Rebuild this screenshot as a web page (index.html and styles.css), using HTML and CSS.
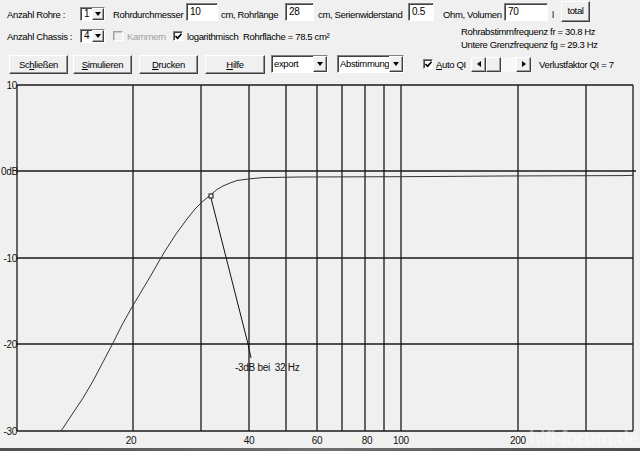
FILE: index.html
```html
<!DOCTYPE html>
<html lang="de">
<head>
    <meta charset="UTF-8">
    <title>Bassreflex Simulation</title>
    <link rel="stylesheet" href="styles.css">
</head>
<body>
    <div class="toolbar">
        <div class="row row-top">
            <span class="lbl lbl-rohre">Anzahl Rohre :</span>
            <span class="combo combo-num"><span class="combo-text">1</span><span class="drop"></span></span>
            <span class="lbl lbl-durch">Rohrdurchmesser</span>
            <span class="field f-durch">10</span>
            <span class="lbl lbl-laenge">cm, Rohrlänge</span>
            <span class="field f-laenge">28</span>
            <span class="lbl lbl-serie">cm, Serienwiderstand</span>
            <span class="field f-serie">0.5</span>
            <span class="lbl lbl-ohm">Ohm, Volumen</span>
            <span class="field f-vol">70</span>
            <span class="lbl lbl-l">l</span>
            <span class="btn btn-total">total</span>
        </div>

        <div class="row row-mid">
            <div class="mid-left">
                <span class="lbl lbl-rohre">Anzahl Chassis :</span>
                <span class="combo combo-num"><span class="combo-text">4</span><span class="drop"></span></span>
                <span class="check check-off disabled"></span>
                <span class="lbl lbl-kammern grayed">Kammern</span>
                <span class="check">
                    <svg width="7" height="7" viewBox="0 0 7 7"><polyline points="0.5,3 2.6,5.2 6.5,0.8" fill="none" stroke="#000" stroke-width="1.6"/></svg>
                </span>
                <span class="lbl lbl-log">logarithmisch</span>
                <span class="lbl">Rohrfläche = 78.5 cm²</span>
            </div>
            <div class="freq">
                <div>Rohrabstimmfrequenz fr = 30.8 Hz</div>
                <div>Untere Grenzfrequenz fg = 29.3 Hz</div>
            </div>
        </div>

        <div class="row row-bottom">
            <span class="btn btn-cmd first">Sc<u>h</u>ließen</span>
            <span class="btn btn-cmd gap5"><u>S</u>imulieren</span>
            <span class="btn btn-cmd gap7"><u>D</u>rucken</span>
            <span class="btn btn-cmd btn-wide gap7"><u>H</u>ilfe</span>
            <span class="combo combo-tall combo-export"><span class="combo-text">export</span><span class="drop"></span></span>
            <span class="combo combo-tall combo-abst"><span class="combo-text">Abstimmung</span><span class="drop"></span></span>
            <span class="check check-auto">
                <svg width="7" height="7" viewBox="0 0 7 7"><polyline points="0.5,3 2.6,5.2 6.5,0.8" fill="none" stroke="#000" stroke-width="1.6"/></svg>
            </span>
            <span class="lbl lbl-auto"><u>A</u>uto QI</span>
            <span class="scroll">
                <span class="sb-btn"><span class="arrow-left"></span></span>
                <span class="sb-btn"></span>
                <span class="sb-track"></span>
                <span class="sb-btn"><span class="arrow-right"></span></span>
            </span>
            <span class="lbl lbl-verlust">Verlustfaktor QI = 7</span>
        </div>
    </div>

    <svg class="chart" width="640" height="370" viewBox="0 78 640 370">
        <g class="grid" fill="none" stroke="#1a1a1a" stroke-width="1.3">
            <path d="M17 85H633 M17 171H636 M17 258H633 M17 344H633 M17 431H633"/>
            <path d="M17 85V431 M133 85V431 M201 85V431 M249 85V431 M286 85V431 M317 85V431 M342 85V431 M365 85V431 M384 85V431 M401 85V431 M518 85V431 M586 85V431 M633 85V431"/>
        </g>

        <g class="axis-y" text-anchor="end">
            <text x="17" y="88.5">10</text>
            <text x="18" y="174.5">0dB</text>
            <text x="17" y="261.5">-10</text>
            <text x="17" y="347.5">-20</text>
            <text x="17" y="434.5">-30</text>
        </g>
        <g class="axis-x" text-anchor="middle">
            <text x="131" y="444">20</text>
            <text x="249" y="444">40</text>
            <text x="317" y="444">60</text>
            <text x="367" y="444">80</text>
            <text x="401" y="444">100</text>
            <text x="518" y="444">200</text>
        </g>

        <polyline class="curve" fill="none" stroke="#333" stroke-width="1"
            points="61,431 67,422 73,413 83,398 93,381 103,362 113,343 122,325 132,307 141,292 150,277 158,263 165,251 176,234 187,219 195,209 202,202 211,194.5 217,189.5 223,186 230,183 237,180.5 250,178.8 263,177.6 300,177 400,176.7 433,176.5 500,176 624,175.6 633,175.3"/>

        <rect x="209" y="194" width="4" height="4" fill="#f0f0f0" stroke="#111" stroke-width="1"/>
        <polyline fill="none" stroke="#111" stroke-width="1" points="211,198 248,344 251,358"/>
        <text class="note" x="235" y="370.5">-3dB bei&#160; 32 Hz</text>

        <text class="watermark" x="638" y="445" text-anchor="end">hifi-forum.de</text>
    </svg>
    <div class="frame-bottom"></div>
</body>
</html>
```

FILE: styles.css
```css
html, body {
    margin: 0;
    padding: 0;
}
body {
    width: 640px;
    height: 451px;
    overflow: hidden;
    background-color: #f0f0f0;
    font-family: "Liberation Sans", Arial, sans-serif;
    font-size: 9.5px;
    letter-spacing: -0.35px;
    color: #000;
}
.toolbar {
    height: 78px;
}
.row {
    display: flex;
    white-space: nowrap;
}
.lbl {
    line-height: 13px;
    white-space: nowrap;
}

/* first row */
.row-top {
    height: 21px;
    align-items: flex-end;
    padding-left: 7px;
}
.lbl-rohre { width: 73px; }
.lbl-durch { width: 73px; margin-left: 8px; }
.lbl-laenge { width: 64px; margin-left: 3px; }
.lbl-serie { width: 90px; margin-left: 4px; }
.lbl-ohm { width: 61px; margin-left: 9px; }
.lbl-l { width: 9px; margin-left: 4px; }

.field {
    box-sizing: border-box;
    height: 18px;
    padding: 1px 3px;
    line-height: 14px;
    font-size: 10px;
    background-color: #fff;
    border: 1px solid;
    border-color: #808080 #fff #fff #808080;
    box-shadow: inset 1px 1px #404040;
}
.f-durch { width: 32px; }
.f-laenge { width: 29px; }
.f-serie { width: 26px; }
.f-vol { width: 44px; }

.combo {
    box-sizing: border-box;
    display: flex;
    height: 14px;
    background-color: #fff;
    border: 1px solid;
    border-color: #808080 #fff #fff #808080;
    box-shadow: inset 1px 1px #404040;
}
.combo-num { width: 25px; }
.combo-text {
    flex: 1;
    padding: 0 0 0 3px;
    line-height: 12px;
    font-size: 10px;
    overflow: hidden;
}
.drop {
    box-sizing: border-box;
    width: 12px;
    display: flex;
    align-items: center;
    justify-content: center;
    background-color: #f0f0f0;
    border: 1px solid;
    border-color: #fff #404040 #404040 #fff;
    box-shadow: inset -1px -1px #a0a0a0;
}
.drop::after {
    content: "";
    border-style: solid;
    border-width: 4px 3.5px 0 3.5px;
    border-color: #000 transparent transparent transparent;
}

.btn {
    box-sizing: border-box;
    display: flex;
    align-items: center;
    justify-content: center;
    background-color: #f0f0f0;
    border: 1px solid;
    border-color: #fff #404040 #404040 #fff;
    box-shadow: inset -1px -1px #909090;
}
.btn u {
    text-decoration-thickness: 1px;
    text-underline-offset: 1px;
}
.btn-total {
    width: 29px;
    height: 21px;
    margin-bottom: -1px;
    padding-bottom: 3px;
}

/* second row */
.row-mid {
    height: 31px;
    align-items: flex-start;
    padding-left: 7px;
}
.mid-left {
    display: flex;
    align-items: flex-end;
    height: 22px;
}
.check {
    box-sizing: border-box;
    width: 10px;
    height: 10px;
    display: flex;
    align-items: center;
    justify-content: center;
    background-color: #fff;
    border: 1px solid;
    border-color: #808080 #fff #fff #808080;
    box-shadow: inset 1px 1px #404040;
    margin-bottom: 2px;
}
.check svg {
    display: block;
}
.check-off {
    margin-left: 8px;
}
.disabled {
    background-color: #f0f0f0;
    border-color: #a0a0a0 #fff #fff #a0a0a0;
    box-shadow: inset 1px 1px #c8c8c8;
}
.grayed {
    color: #a0a0a0;
}
.lbl-kammern { width: 46px; margin-left: 4px; }
.lbl-log { width: 56px; margin-left: 4px; }
.freq {
    margin-left: auto;
    width: 179px;
    padding-top: 4px;
    line-height: 13px;
}

/* third row */
.row-bottom {
    height: 24px;
    align-items: center;
}
.btn-cmd {
    width: 59px;
    height: 19px;
}
.btn-wide { width: 60px; }
.first { margin-left: 9px; }
.gap5 { margin-left: 5px; }
.gap7 { margin-left: 7px; }
.combo-tall {
    height: 18px;
}
.combo-tall .combo-text {
    padding-left: 2px;
    line-height: 15px;
    font-size: 9.5px;
}
.combo-tall .drop {
    width: 14px;
}
.combo-export { width: 57px; margin-left: 6px; }
.combo-abst { width: 67px; margin-left: 9px; }
.check-auto {
    margin: 0 0 0 19px;
}
.lbl-auto { width: 35px; margin-left: 3px; }
.lbl-verlust { margin-left: 8px; }

.scroll {
    display: flex;
    width: 60px;
    height: 15px;
    background-color: #f8f8f8;
}
.sb-btn {
    box-sizing: border-box;
    width: 15px;
    height: 15px;
    display: flex;
    align-items: center;
    justify-content: center;
    background-color: #f0f0f0;
    border: 1px solid;
    border-color: #fff #404040 #404040 #fff;
    box-shadow: inset -1px -1px #a0a0a0;
}
.sb-track {
    flex: 1;
}
.arrow-left {
    border-style: solid;
    border-width: 3.5px 4px 3.5px 0;
    border-color: transparent #000 transparent transparent;
}
.arrow-right {
    border-style: solid;
    border-width: 3.5px 0 3.5px 4px;
    border-color: transparent transparent transparent #000;
}

/* chart */
.chart {
    display: block;
}
.chart text {
    font-family: "Liberation Sans", Arial, sans-serif;
    font-size: 10px;
    letter-spacing: -0.3px;
    fill: #111;
}
.chart .watermark {
    font-size: 20px;
    font-weight: bold;
    letter-spacing: -1px;
    fill: #fff;
    opacity: 0.4;
}
.frame-bottom {
    height: 3px;
    background: linear-gradient(to right, #505050, #707070 50%, #4a4a4a);
}
```
